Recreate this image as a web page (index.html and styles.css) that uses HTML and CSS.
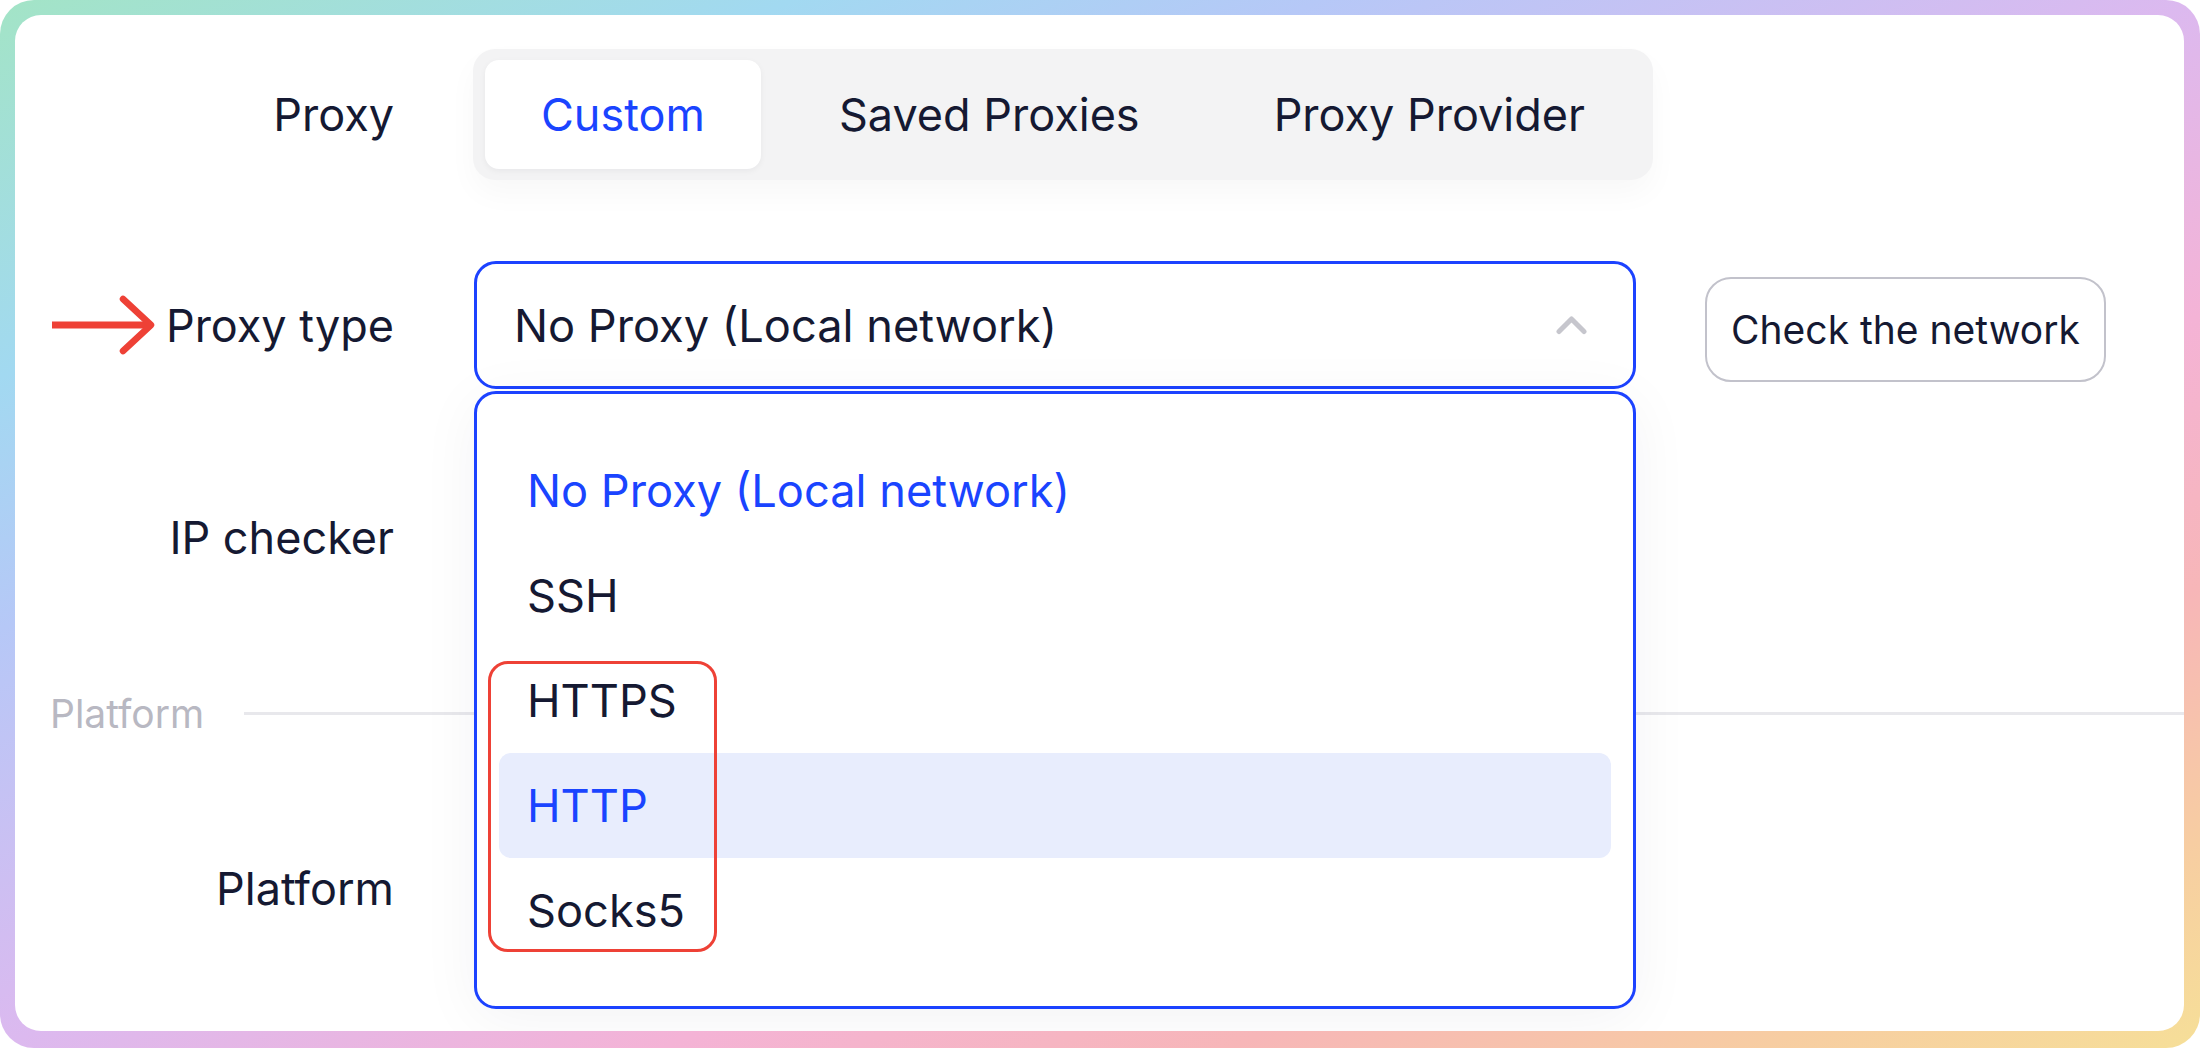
FILE: index.html
```html
<!DOCTYPE html>
<html lang="en">
<head>
<meta charset="utf-8">
<title>Proxy settings</title>
<link rel="stylesheet" href="styles.css">
</head>
<body>
<div class="frame">
  <div class="card">
    <div class="row row-proxy">
      <div class="label">Proxy</div>
      <div class="segmented">
        <div class="tab active">Custom</div>
        <div class="tab">Saved Proxies</div>
        <div class="tab">Proxy Provider</div>
      </div>
    </div>

    <div class="row row-type">
      <svg class="arrow" width="104" height="62" viewBox="0 0 104 62" aria-hidden="true">
        <line x1="0" y1="30" x2="97" y2="30" stroke="#ee4136" stroke-width="7"/>
        <polyline points="71,4 99,30 71,56" fill="none" stroke="#ee4136" stroke-width="6.5" stroke-linecap="round" stroke-linejoin="round"/>
      </svg>
      <div class="label">Proxy type</div>
      <div class="select-wrap">
        <div class="select">
          <span class="select-value">No Proxy (Local network)</span>
          <svg class="chevron" width="33" height="20" viewBox="0 0 33 20" aria-hidden="true">
            <polyline points="4,16.5 16.5,4 29,16.5" fill="none" stroke="#c6c6cd" stroke-width="5" stroke-linecap="round" stroke-linejoin="round"/>
          </svg>
        </div>
        <div class="dropdown">
          <div class="option selected">No Proxy (Local network)</div>
          <div class="option">SSH</div>
          <div class="option">HTTPS</div>
          <div class="option hover">HTTP</div>
          <div class="option">Socks5</div>
          <div class="highlight-box"></div>
        </div>
      </div>
      <button class="check-btn">Check the network</button>
    </div>

    <div class="row row-ip">
      <div class="label">IP checker</div>
    </div>

    <div class="section">
      <span class="section-title">Platform</span>
      <span class="section-line"></span>
    </div>

    <div class="row row-platform">
      <div class="label">Platform</div>
    </div>
  </div>
</div>
</body>
</html>
```

FILE: styles.css
```css
* { box-sizing: border-box; }

html, body {
  margin: 0;
  padding: 0;
  background: #ffffff;
}

body {
  font-family: Inter, "Noto Sans", "Liberation Sans", sans-serif;
  color: #151932;
}

.frame {
  width: 2200px;
  height: 1048px;
  padding: 15px 16px 17px 15px;
  border-radius: 34px;
  background: linear-gradient(to bottom right,
    #a3e4c6 0%,
    #a2d9f1 18%,
    #b6c8f7 30%,
    #dcb9ef 50%,
    #f4b3d6 65%,
    #f7b6b8 78%,
    #f7cda2 90%,
    #f6df98 100%);
}

.card {
  height: 100%;
  background: #ffffff;
  border-radius: 26px;
  padding-top: 34px;
  overflow: hidden;
}

.row {
  position: relative;
  display: flex;
  align-items: center;
  gap: 79px;
}

.label {
  width: 379px;
  flex: none;
  text-align: right;
  font-size: 45px;
  line-height: 1;
}

.row-proxy { height: 131px; }
.row-type { height: 128px; margin-top: 81px; }
.row-ip { height: 128px; margin-top: 84px; }
.row-platform { height: 128px; margin-top: 91px; }

/* segmented control */
.segmented {
  display: flex;
  gap: 22px;
  padding: 11px 12px;
  height: 131px;
  background: #f3f3f4;
  border-radius: 22px;
  box-shadow: 0 14px 30px rgba(20, 20, 40, 0.03);
}

.tab {
  display: flex;
  align-items: center;
  padding: 0 56px;
  font-size: 45px;
  border-radius: 14px;
  color: #151932;
}

.tab.active {
  background: #ffffff;
  color: #1a44ff;
  box-shadow: 0 2px 6px rgba(20, 20, 40, 0.05);
}

/* select */
.select-wrap {
  position: relative;
  width: 1162px;
  flex: none;
  margin-left: 1px;
}

.select {
  height: 128px;
  border: 3px solid #1c42ff;
  border-radius: 22px;
  display: flex;
  align-items: center;
  justify-content: space-between;
  padding: 0 45px 0 37px;
  font-size: 45.2px;
  background: #ffffff;
}

.chevron { display: block; }

.dropdown {
  position: absolute;
  left: 0;
  right: 0;
  top: calc(100% + 2px);
  height: 618px;
  border: 3px solid #1c42ff;
  border-radius: 22px;
  background: #ffffff;
  padding: 44px 22px 0 22px;
  box-shadow: 0 10px 60px rgba(20, 20, 50, 0.05);
  z-index: 2;
}

.option {
  height: 105px;
  display: flex;
  align-items: center;
  padding-left: 28px;
  font-size: 45.2px;
  border-radius: 12px;
  color: #151932;
}

.option.selected { color: #1a44ff; }

.option.hover {
  background: #e8edfd;
  color: #1a44ff;
}

.highlight-box {
  position: absolute;
  left: 11px;
  top: 267px;
  width: 229px;
  height: 291px;
  border: 3px solid #ee4136;
  border-radius: 20px;
  pointer-events: none;
}

/* button */
.check-btn {
  margin-left: -10px;
  margin-top: 8px;
  width: 401px;
  height: 105px;
  border: 2.5px solid #c2c2cb;
  border-radius: 26px;
  background: #ffffff;
  font-family: inherit;
  font-size: 39px;
  color: #151932;
  padding: 0;
}

/* annotation arrow */
.arrow {
  position: absolute;
  left: 37px;
  top: 34px;
}

/* section divider */
.section {
  display: flex;
  align-items: center;
  gap: 40px;
  height: 40px;
  margin-top: 92px;
  padding-left: 35px;
}

.section-title {
  font-size: 39px;
  color: #b8b8c2;
  line-height: 1;
}

.section-line {
  flex: 1;
  height: 3px;
  background: #e8e8ec;
}
```
